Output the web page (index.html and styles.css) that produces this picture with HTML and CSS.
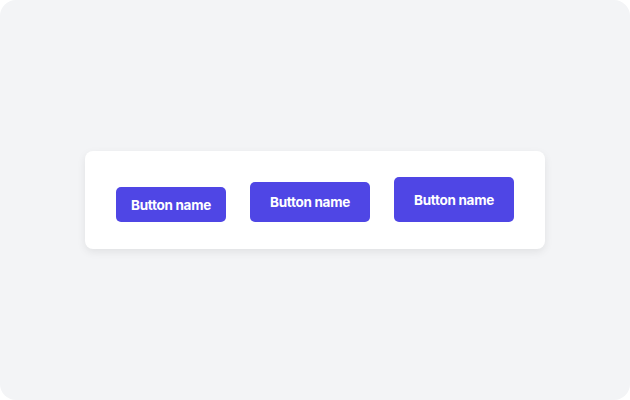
FILE: index.html
```html
<!DOCTYPE html>
<html>
<head>
<meta charset="utf-8">
<link rel="stylesheet" href="styles.css">
</head>
<body>
<div class="stage">
  <div class="card">
    <button class="btn btn-sm">Button name</button>
    <button class="btn btn-md">Button name</button>
    <button class="btn btn-lg">Button name</button>
  </div>
</div>
</body>
</html>
```
FILE: styles.css
```css
html, body {
  margin: 0;
  padding: 0;
  background: #ffffff;
}
.stage {
  width: 630px;
  height: 400px;
  background: #f3f4f6;
  border-radius: 16px;
  display: flex;
  align-items: center;
  justify-content: center;
}
.card {
  width: 460px;
  height: 98px;
  box-sizing: border-box;
  background: #ffffff;
  border-radius: 8px;
  box-shadow: 0 3px 8px rgba(0, 0, 0, 0.08);
  display: flex;
  align-items: flex-end;
  padding: 0 31px 27px;
  gap: 24px;
}
.btn {
  border: none;
  background: #4f46e5;
  color: #ffffff;
  font-family: Inter, "Liberation Sans", sans-serif;
  font-weight: 700;
  font-size: 13.5px;
  letter-spacing: -0.3px;
  border-radius: 5px;
  display: flex;
  align-items: center;
  justify-content: center;
  padding: 0;
  box-sizing: border-box;
}
.btn-sm { width: 110px; height: 35px; }
.btn-md { width: 120px; height: 40px; }
.btn-lg { width: 120px; height: 45px; }
```
